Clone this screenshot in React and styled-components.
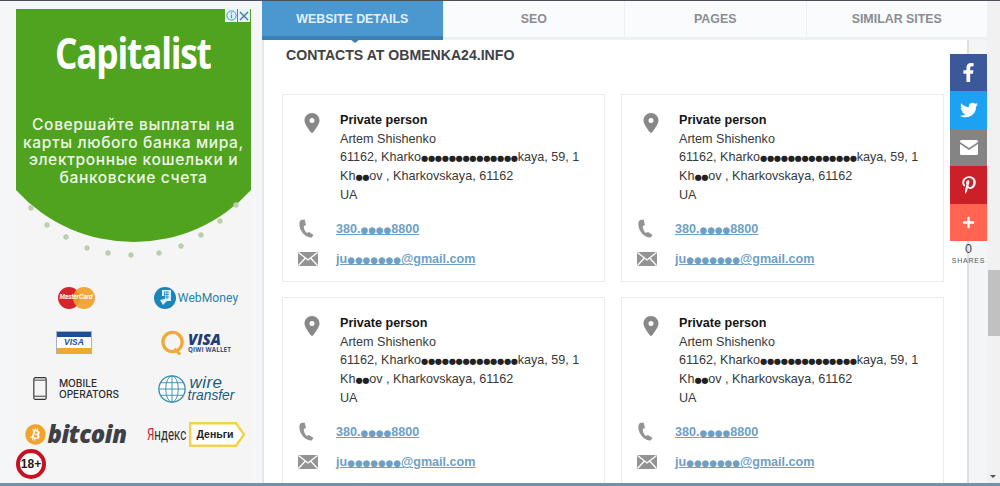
import React from 'react';
import styled, { createGlobalStyle } from 'styled-components';
import { FaFacebookF, FaTwitter, FaPinterestP, FaPlus, FaBitcoin } from 'react-icons/fa';
import { FaLocationDot } from 'react-icons/fa6';

const Global = createGlobalStyle`
  html, body { margin: 0; padding: 0; height: 100%; overflow: hidden; background: #f4f6f8; }
  #root { height: 100%; }
  * { box-sizing: border-box; }
`;

const Page = styled.div`
  width: 1000px;
  height: 486px;
  position: relative;
  overflow: hidden;
  display: flex;
  flex-direction: column;
  font-family: "Liberation Sans", Arial, sans-serif;
  background: #f4f6f8;
`;
const TopLine = styled.div`height: 1px; flex: none; background: #4b5058;`;
const Body = styled.div`flex: 1; min-height: 0; display: flex;`;
const BottomBar = styled.div`height: 3px; flex: none; background: #6f93ad;`;

const Sidebar = styled.aside`
  width: 262px; flex: none; padding: 8px 11px 0 16px;
`;
const Ad = styled.div`
  width: 235px; height: 474px; position: relative; background: #f5f5f6; overflow: hidden;
`;
const AdHead = styled.div`
  height: 233px;
  background: #4fa31e;
  clip-path: path('M0 0H235V181A158.7 158.7 0 0 1 0 181Z');
  display: flex; flex-direction: column; align-items: center; color: #fff;
`;
const AdLogo = styled.div`
  font-family: "Open Sans", sans-serif; font-weight: 700; font-size: 43px; letter-spacing: -1.5px;
  line-height: 50px; margin-top: 19px; margin-left: -2px; transform: scaleX(.82);
`;
const AdText = styled.div`
  font-family: "Inter", sans-serif; font-weight: 500; font-size: 15.6px; letter-spacing: .6px; line-height: 17.6px;
  text-align: center; margin-top: 38px; white-space: nowrap; color: #eef6e6;
`;
const AdButtons = styled.div`
  position: absolute; right: 1px; top: 0; display: flex; gap: 1px;
`;
const AdBtn = styled.div`
  width: 12px; height: 13px; background: #e8f2f6; display: flex; align-items: center; justify-content: center;
`;
const Dots = styled.svg`position: absolute; left: 0; top: 0; display: block;`;
const Payments = styled.div`
  position: absolute; left: 0; right: 0; top: 266px;
  display: grid; grid-template-columns: 120px 110px; column-gap: 5px; grid-auto-rows: 45.5px;
`;
const Pay = styled.div`display: flex; align-items: center; justify-content: center; min-width: 0;`;
const MC = styled.div`position: relative; width: 37px; height: 22px;`;
const MCText = styled.span`
  position: absolute; left: 0; right: 0; top: 6px; text-align: center; color: #fff;
  font: italic 700 6.4px "Liberation Sans", sans-serif; letter-spacing: -.2px;
`;
const WMText = styled.span`
  font: 400 12.2px "Roboto", sans-serif; color: #2a82a8; margin-left: 2px;
`;
const VisaCard = styled.div`
  width: 36px; height: 23px; margin: -2px 4px 0 0; border: 1px solid #a9b2c4; background: #fff; display: flex; flex-direction: column;
`;
const VisaTop = styled.div`height: 5px; background: #1d4f96;`;
const VisaMid = styled.div`
  flex: 1; text-align: center; color: #1d4f96; font: italic 700 8.5px/10px "Liberation Sans", sans-serif;
`;
const VisaBottom = styled.div`height: 5px; background: #f0a92c;`;
const Qiwi = styled.div`display: flex; flex-direction: column; margin-left: 2px; color: #1f3d78;`;
const QiwiBig = styled.span`font: italic 800 15px/14px "Open Sans", sans-serif;`;
const QiwiSmall = styled.span`font: 700 6.2px/8px "Open Sans", sans-serif; letter-spacing: .2px; color: #35507f; white-space: nowrap;`;
const MobileText = styled.div`
  font: 500 10.1px/11px "Inter", sans-serif; color: #2b2b2b; margin-left: 12px; white-space: nowrap;
`;
const Wire = styled.div`
  display: flex; flex-direction: column; margin-left: 2px; color: #1e5b7c;
  font-family: "Liberation Sans", sans-serif; font-style: italic;
`;
const WireTop = styled.span`font-size: 17px; line-height: 13px; margin-left: 2px; letter-spacing: .4px;`;
const WireBottom = styled.span`font-size: 13.8px; line-height: 13px;`;
const Btc = styled.span`
  font: italic 800 23.8px/28px "Open Sans", sans-serif; color: #3e4045; margin-left: 1px; letter-spacing: -.4px;
`;
const YaWord = styled.span`
  display: block; width: 38px; flex: none; transform-origin: 0 50%; transform: scaleX(.72);
  font: 400 16px "Roboto", sans-serif; color: #2a2a2a; white-space: nowrap;
`;
const YaRed = styled.span`color: #c6262e;`;
const YaTag = styled.svg`flex: none; display: block;`;
const YaBox = styled.div`position: relative; width: 57px; height: 25px; margin-left: 4px; flex: none;`;
const YaBoxText = styled.span`
  position: absolute; left: 8px; top: 6px; font: 700 10.5px/13px "Liberation Sans", sans-serif; color: #222;
`;
const Age = styled.div`
  position: absolute; left: 0; top: 440px; width: 30px; height: 30px; border-radius: 50%;
  border: 4px solid #c8101e; background: #fff; color: #1a1a1a;
  display: flex; align-items: center; justify-content: center;
  font: 700 12px "Liberation Sans", sans-serif;
`;

const Main = styled.main`flex: 1; min-width: 0; display: flex; flex-direction: column; width: 725px;`;
const Tabs = styled.nav`
  flex: none; height: 39px; display: flex; background: #eef0f3; padding-bottom: 3px; gap: 1px;
`;
const Tab = styled.div`
  position: relative; flex: 1; display: flex; align-items: center; justify-content: center;
  font-weight: 700; font-size: 12.4px;
  background: ${p => (p.$active ? '#4b97cf' : '#f9fbfd')};
  color: ${p => (p.$active ? '#e3f0fa' : '#8a8d91')};
  ${p => p.$active && `
    margin-bottom: -3px; border-bottom: 4px solid #3d80b2;
    &::after {
      content: ''; position: absolute; left: 84px; top: 100%; width: 0; height: 0;
      border-left: 9px solid transparent; border-right: 9px solid transparent; border-top: 7px solid #3d80b2;
    }
  `}
`;
const ContentRow = styled.div`flex: 1; min-height: 0; display: flex;`;
const Content = styled.section`
  width: 707px; flex: none; background: #fff; border-left: 2px solid #e4e7eb; border-right: 2px solid #dcdfe4;
  padding: 7px 0 0 18px; overflow: hidden;
`;
const Title = styled.h2`
  margin: 0 0 31px 4px; font-size: 14.1px; line-height: 16px; font-weight: 700; color: #3f4246;
`;
const Cards = styled.div`display: grid; grid-template-columns: 323px 323px; column-gap: 16px; row-gap: 15px;`;
const Card = styled.article`
  height: 188px; border: 1px solid #eaecee; background: #fff; display: flex; flex-direction: column; padding: 16px 0 0 15px;
`;
const AddressRow = styled.div`display: flex;`;
const PinBox = styled.div`width: 42px; flex: none; padding: 2px 0 0 4px; color: #888; font-size: 20px; line-height: 0;`;
const Address = styled.div`font-size: 12.6px; line-height: 18.7px; color: #383838; white-space: nowrap;`;
const Name = styled.div`font-weight: 700; color: #151515;`;
const Mask = styled.span`font-size: 8.3px; letter-spacing: -.33px; line-height: 0; color: #222; font-family: "DejaVu Sans", sans-serif;`;
const LinkRow = styled.div`
  display: flex; align-items: center; height: 30.5px;
`;
const LinkIcon = styled.div`width: 38px; flex: none; display: flex; align-items: center; line-height: 0;`;
const A = styled.a`
  font-size: 12.6px; font-weight: 700; color: #6f9fc4; text-decoration: underline; white-space: nowrap;
`;
const LinkMask = styled.span`font-size: 8.8px; line-height: 0; font-family: "DejaVu Sans", sans-serif;`;
const Links = styled.div`margin-top: 9px; display: flex; flex-direction: column;`;

const Gutter = styled.div`width: 18px; flex: none; background: #f4f5f7;`;
const Share = styled.div`
  position: absolute; left: 950px; top: 54px; width: 37px; display: flex; flex-direction: column; align-items: center;
`;
const ShareBtn = styled.div`
  width: 37px; height: 37.4px; background: ${p => p.$bg}; color: #fff; display: flex; align-items: center; justify-content: center;
`;
const ShareCount = styled.div`font-size: 12.5px; line-height: 13px; color: #444; margin-top: 2px;`;
const ShareLabel = styled.div`font-size: 7px; line-height: 9px; color: #555; letter-spacing: .8px;`;

const Scrollbar = styled.div`
  width: 13px; flex: none; background: #f1f1f1; position: relative;
`;
const Thumb = styled.div`
  position: absolute; left: 1px; right: 0; top: 269px; height: 66px; background: #c1c1c1;
`;
const Arrow = styled.div`
  position: absolute; left: 3px; bottom: 5px; width: 0; height: 0;
  border-left: 3.5px solid transparent; border-right: 3.5px solid transparent; border-top: 3.5px solid #505050;
`;

const PhoneIcon = () => (
  <svg width="17" height="19" viewBox="0 0 17 19" aria-hidden="true">
    <path d="M3.2 1 L6.6 .4 L8 6 L5.8 7 C5.6 9.6 6.8 12.4 8.8 14 L11 13 L15.6 16 L13.6 18.4 C8 19 .8 12 1.4 4.2 C1.5 2.8 2.2 1.6 3.2 1 Z" fill="#939393" />
  </svg>
);
const MailIcon = () => (
  <svg width="20" height="14" viewBox="0 0 20 14" aria-hidden="true">
    <rect width="20" height="14" fill="#939393" />
    <path d="M0.5 0.5 L10 8 L19.5 0.5 M0.5 13.5 L7.4 6 M19.5 13.5 L12.6 6" fill="none" stroke="#fff" strokeWidth="1.3" />
  </svg>
);
const ShareMail = () => (
  <svg width="18" height="15" viewBox="0 0 18 15" aria-hidden="true">
    <path d="M0 1.6 C0 .7 .7 0 1.6 0 H16.4 C17.3 0 18 .7 18 1.6 V2 L9 8 L0 2 Z M0 4 L9 10 L18 4 V13.4 C18 14.3 17.3 15 16.4 15 H1.6 C.7 15 0 14.3 0 13.4 Z" fill="#fff" />
  </svg>
);

const dotPts = [[15,199],[31,216],[50,228],[71,239],[92,244],[115,246],[143,244],[165,237],[185,226],[204,212],[220,196]];

const Contact = () => (
  <Card>
    <AddressRow>
      <PinBox><FaLocationDot /></PinBox>
      <Address>
        <Name>Private person</Name>
        <div>Artem Shishenko</div>
        <div>61162, Kharko<Mask>●●●●●●●●●●●●●●</Mask>kaya, 59, 1</div>
        <div>Kh<Mask>●●</Mask>ov , Kharkovskaya, 61162</div>
        <div>UA</div>
      </Address>
    </AddressRow>
    <Links>
      <LinkRow><LinkIcon><PhoneIcon /></LinkIcon><A>380.<LinkMask>●●●●</LinkMask>8800</A></LinkRow>
      <LinkRow><LinkIcon><MailIcon /></LinkIcon><A>ju<LinkMask>●●●●●●●</LinkMask>@gmail.com</A></LinkRow>
    </Links>
  </Card>
);

export default function App() {
  return (
    <Page>
      <Global />
      <TopLine />
      <Body>
        <Sidebar>
          <Ad>
            <AdHead>
              <AdLogo>Capitalist</AdLogo>
              <AdText>
                Совершайте выплаты на<br />карты любого банка мира,<br />электронные кошельки и<br />банковские счета
              </AdText>
            </AdHead>
            <Dots width="235" height="270" viewBox="0 0 235 270" aria-hidden="true">
              {dotPts.map(([x, y], i) => <circle key={i} cx={x} cy={y} r="2.7" fill="#bccdb0" />)}
            </Dots>
            <AdButtons>
              <AdBtn>
                <svg width="11" height="11" viewBox="0 0 11 11"><circle cx="5.5" cy="5.5" r="4.6" fill="none" stroke="#2f9fd0" /><path d="M5.5 2.6v1.2M5.5 4.8v3.4" stroke="#2f9fd0" strokeWidth="1.3" /></svg>
              </AdBtn>
              <AdBtn>
                <svg width="10" height="10" viewBox="0 0 10 10"><path d="M1 1l8 8M9 1l-8 8" stroke="#3d7f9f" strokeWidth="1.4" /></svg>
              </AdBtn>
            </AdButtons>
            <Payments>
              <Pay>
                <MC>
                  <svg width="37" height="22" viewBox="0 0 37 22" aria-hidden="true">
                    <circle cx="11" cy="11" r="11" fill="#d8232a" /><circle cx="26" cy="11" r="11" fill="#f0a029" fillOpacity=".92" />
                  </svg>
                  <MCText>MasterCard</MCText>
                </MC>
              </Pay>
              <Pay>
                <svg width="22" height="22" viewBox="0 0 22 22" aria-hidden="true">
                  <circle cx="11" cy="11" r="11" fill="#1b85b8" />
                  <path d="M8 3h9v11h-4l-4 4-3-5 4-1V9H8z" fill="#fff" fillOpacity=".85" />
                  <path d="M10 5h5M10 7.5h5M10 10h5M10.5 5v7M13 5v7" stroke="#1b85b8" strokeWidth=".8" />
                </svg>
                <WMText>WebMoney</WMText>
              </Pay>
              <Pay>
                <VisaCard><VisaTop /><VisaMid>VISA</VisaMid><VisaBottom /></VisaCard>
              </Pay>
              <Pay>
                <svg width="25" height="27" viewBox="0 0 26 27" aria-hidden="true">
                  <circle cx="12" cy="12" r="10" fill="none" stroke="#f0a93a" strokeWidth="3.4" />
                  <path d="M14 19l6 6" stroke="#f0a93a" strokeWidth="3" />
                </svg>
                <Qiwi><QiwiBig>VISA</QiwiBig><QiwiSmall>QIWI WALLET</QiwiSmall></Qiwi>
              </Pay>
              <Pay>
                <svg width="14" height="23" viewBox="0 0 13 22" aria-hidden="true">
                  <rect x=".6" y=".6" width="11.8" height="20.8" rx="1.4" fill="none" stroke="#333" strokeWidth="1.1" />
                  <path d="M1 3h11M1 18.4h11" stroke="#333" strokeWidth=".9" />
                </svg>
                <MobileText>MOBILE<br />OPERATORS</MobileText>
              </Pay>
              <Pay>
                <svg width="28" height="28" viewBox="0 0 29 29" aria-hidden="true">
                  <circle cx="14.5" cy="14.5" r="13.6" fill="#fff" stroke="#3f8fb2" strokeWidth="1.4" />
                  <ellipse cx="14.5" cy="14.5" rx="6.5" ry="13.6" fill="none" stroke="#3f8fb2" />
                  <path d="M2 8h25M2 21h25M1 14.5h27M14.5 1v27" stroke="#3f8fb2" />
                </svg>
                <Wire><WireTop>wire</WireTop><WireBottom>transfer</WireBottom></Wire>
              </Pay>
              <Pay>
                <FaBitcoin size={21} color="#f2a32c" />
                <Btc>bitcoin</Btc>
              </Pay>
              <Pay>
                <YaWord><YaRed>Я</YaRed>ндекс</YaWord>
                <YaBox>
                  <YaTag width="57" height="25" viewBox="0 0 57 25" aria-hidden="true">
                    <path d="M1.2 1.2H47L55 12.5L47 23.8H1.2Z" fill="#fff" stroke="#f3d24a" strokeWidth="2.4" />
                  </YaTag>
                  <YaBoxText>Деньги</YaBoxText>
                </YaBox>
              </Pay>
            </Payments>
            <Age>18+</Age>
          </Ad>
        </Sidebar>
        <Main>
          <Tabs>
            <Tab $active>WEBSITE DETAILS</Tab>
            <Tab>SEO</Tab>
            <Tab>PAGES</Tab>
            <Tab>SIMILAR SITES</Tab>
          </Tabs>
          <ContentRow>
            <Content>
              <Title>CONTACTS AT OBMENKA24.INFO</Title>
              <Cards>
                <Contact /><Contact /><Contact /><Contact />
              </Cards>
            </Content>
            <Gutter />
          </ContentRow>
        </Main>
        <Scrollbar><Thumb /><Arrow /></Scrollbar>
      </Body>
      <BottomBar />
      <Share>
        <ShareBtn $bg="#3b5998"><FaFacebookF size={19} /></ShareBtn>
        <ShareBtn $bg="#1da1f2"><FaTwitter size={18} /></ShareBtn>
        <ShareBtn $bg="#848484"><ShareMail /></ShareBtn>
        <ShareBtn $bg="#cb2027"><FaPinterestP size={18} /></ShareBtn>
        <ShareBtn $bg="#ff6550"><FaPlus size={13} /></ShareBtn>
        <ShareCount>0</ShareCount>
        <ShareLabel>SHARES</ShareLabel>
      </Share>
    </Page>
  );
}
